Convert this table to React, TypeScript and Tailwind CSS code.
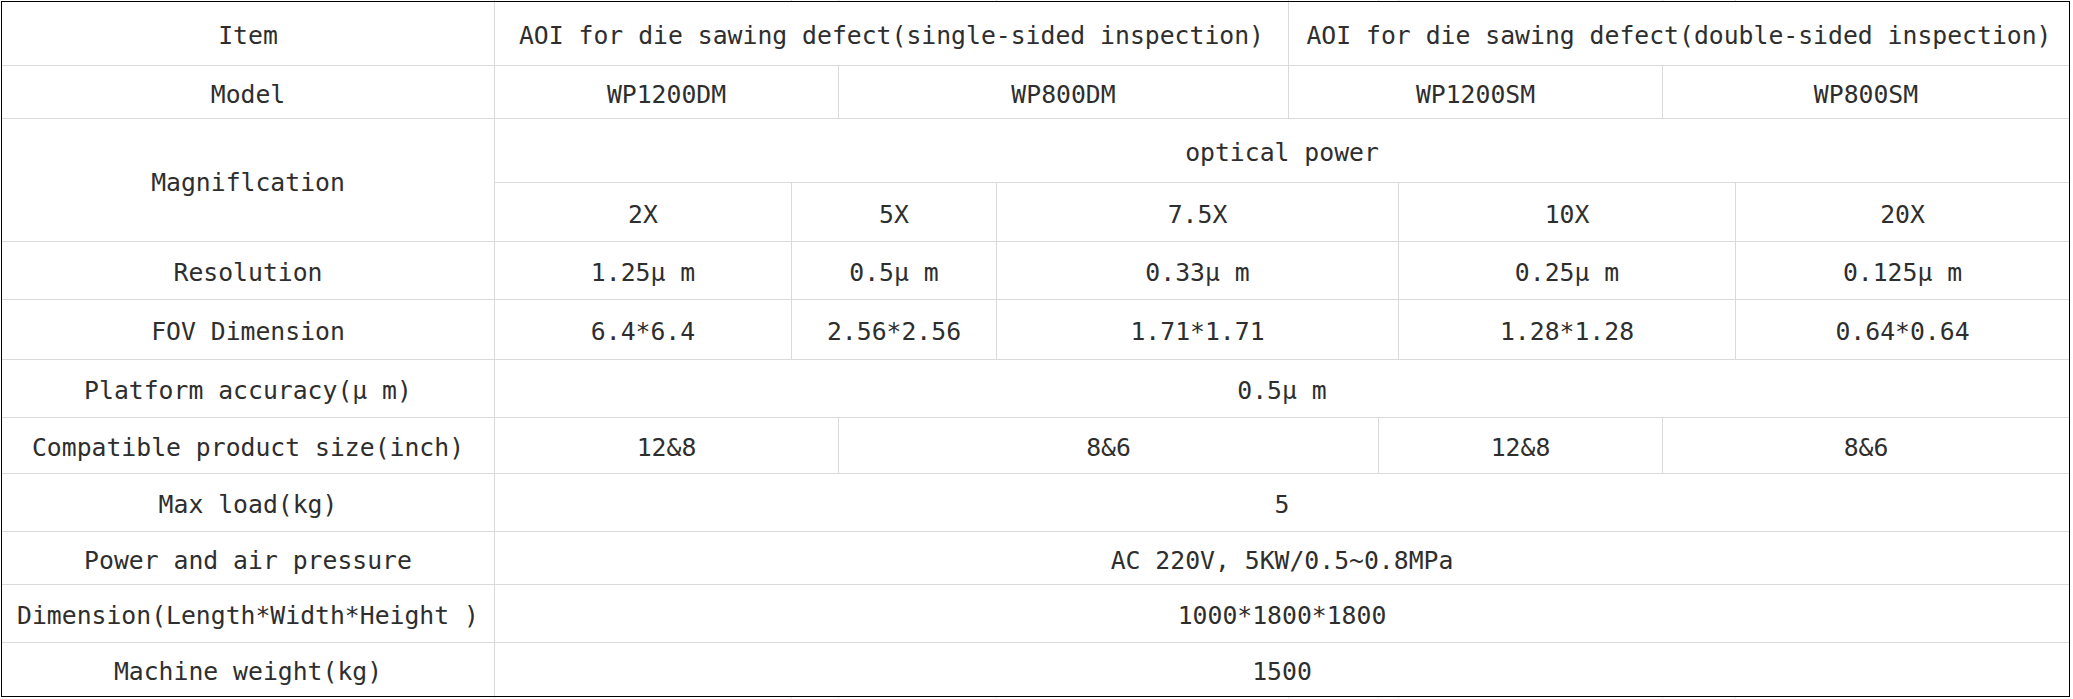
import React from "react";

const cols = "grid-cols-[492px_296px_46px_157px_291px_89px_19px_263px_72px_333px]";

// μ is drawn full-width in the original sheet, so give it two cells
const Txt = ({ s }: { s: string }) => {
  const parts = s.split("μ");
  return (
    <>
      {parts.map((p, i) => (
        <React.Fragment key={i}>
          {p}
          {i < parts.length - 1 && <span className="inline-block w-[2ch] text-left">μ</span>}
        </React.Fragment>
      ))}
    </>
  );
};

type CellProps = { text: string; span?: string };
const Cell = ({ text, span = "" }: CellProps) => (
  <div className={`flex items-center justify-center whitespace-nowrap bg-white pt-[6px] ${span}`}>
    <Txt s={text} />
  </div>
);

const Ticks = () => (
  <div className={`ml-px grid h-px w-[2067px] gap-x-px bg-[#dadada] ${cols}`}>
    {Array.from({ length: 10 }).map((_, i) => (
      <div key={i} className="bg-white" />
    ))}
  </div>
);

const fiveCols = (vals: string[]) => [
  <Cell key="a" text={vals[0]} />,
  <Cell key="b" text={vals[1]} span="col-span-2" />,
  <Cell key="c" text={vals[2]} span="col-span-3" />,
  <Cell key="d" text={vals[3]} span="col-span-2" />,
  <Cell key="e" text={vals[4]} />,
];

export default function App() {
  return (
    <div className="min-h-[699px] w-[2073px] bg-white pl-px font-['DejaVu_Sans_Mono',monospace] text-[24.75px] leading-none text-[#2e2e2e]">
      <Ticks />
      <div
        className={`grid w-[2069px] gap-px border border-black bg-[#dadada] ${cols} grid-rows-[63px_52px_63px_58px_57px_59px_57px_55px_57px_52px_57px_53px]`}
      >
        <Cell text="Item" />
        <Cell text="AOI for die sawing defect(single-sided inspection)" span="col-span-4" />
        <Cell text="AOI for die sawing defect(double-sided inspection)" span="col-span-5" />

        <Cell text="Model" />
        <Cell text="WP1200DM" span="col-span-2" />
        <Cell text="WP800DM" span="col-span-2" />
        <Cell text="WP1200SM" span="col-span-3" />
        <Cell text="WP800SM" span="col-span-2" />

        <Cell text="Magniflcation" span="row-span-2" />
        <Cell text="optical power" span="col-span-9" />
        {fiveCols(["2X", "5X", "7.5X", "10X", "20X"])}

        <Cell text="Resolution" />
        {fiveCols(["1.25μm", "0.5μm", "0.33μm", "0.25μm", "0.125μm"])}

        <Cell text="FOV Dimension" />
        {fiveCols(["6.4*6.4", "2.56*2.56", "1.71*1.71", "1.28*1.28", "0.64*0.64"])}

        <Cell text="Platform accuracy(μm)" />
        <Cell text="0.5μm" span="col-span-9" />

        <Cell text="Compatible product size(inch)" />
        <Cell text="12&8" span="col-span-2" />
        <Cell text="8&6" span="col-span-3" />
        <Cell text="12&8" span="col-span-2" />
        <Cell text="8&6" span="col-span-2" />

        <Cell text="Max load(kg)" />
        <Cell text="5" span="col-span-9" />

        <Cell text="Power and air pressure" />
        <Cell text="AC 220V, 5KW/0.5~0.8MPa" span="col-span-9" />

        <Cell text="Dimension(Length*Width*Height )" />
        <Cell text="1000*1800*1800" span="col-span-9" />

        <Cell text="Machine weight(kg)" />
        <Cell text="1500" span="col-span-9" />
      </div>
      <Ticks />
    </div>
  );
}
